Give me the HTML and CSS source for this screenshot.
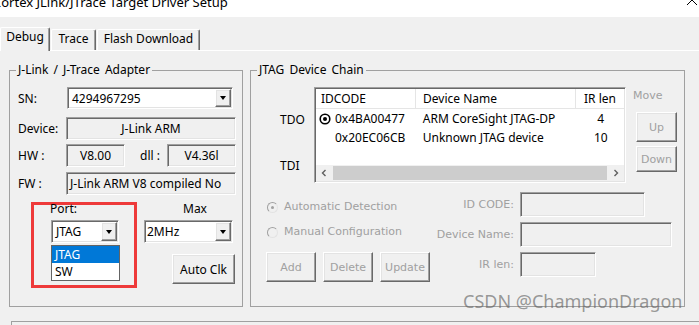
FILE: index.html
```html
<!DOCTYPE html>
<html>

<head>
    <title>Cortex JLink/JTrace Target Driver Setup</title>
    <link rel="stylesheet" href="styles.css">
</head>

<body>
    <div class="titlebar">
        <span class="title">Cortex JLink/JTrace Target Driver Setup</span>
        <svg class="close" width="12" height="12" viewBox="0 0 12 12">
            <path d="M1 1L11 11M11 1L1 11" stroke="#000" stroke-width="1" fill="none" />
        </svg>
    </div>

    <div class="tabs">
        <div class="tab active tab-debug">Debug</div>
        <div class="tab tab-trace">Trace</div>
        <div class="tab tab-flash">Flash Download</div>
    </div>

    <div class="panel">
        <fieldset class="group adapter">
            <legend>J-Link / J-Trace Adapter</legend>
            <div class="row row-sn">
                <span class="lbl">SN:</span>
                <div class="combo combo-sn">
                    <span class="combo-val">4294967295</span>
                    <span class="drop"><i class="arrow"></i></span>
                </div>
            </div>
            <div class="row row-device">
                <span class="lbl">Device:</span>
                <div class="field center w-device">J-Link ARM</div>
            </div>
            <div class="row row-hw">
                <span class="lbl">HW :</span>
                <div class="field center w-hw">V8.00</div>
                <span class="lbl-dll">dll :</span>
                <div class="field center w-dll">V4.36l</div>
            </div>
            <div class="row row-fw">
                <span class="lbl">FW :</span>
                <div class="field w-device">J-Link ARM V8 compiled No</div>
            </div>

            <div class="port-area">
                <div class="highlight-box">
                    <div class="small-lbl port-lbl">Port:</div>
                    <div class="combo combo-port">
                        <span class="combo-val">JTAG</span>
                        <span class="drop"><i class="arrow"></i></span>
                    </div>
                    <ul class="droplist">
                        <li class="sel">JTAG</li>
                        <li>SW</li>
                    </ul>
                </div>
                <div class="max-col">
                    <div class="small-lbl max-lbl">Max</div>
                    <div class="combo combo-max">
                        <span class="combo-val tight">2MHz</span>
                        <span class="drop"><i class="arrow"></i></span>
                    </div>
                    <button class="btn btn-autoclk">Auto Clk</button>
                </div>
            </div>
        </fieldset>

        <fieldset class="group chain">
            <legend>JTAG Device Chain</legend>
            <div class="chain-top">
                <div class="pins">
                    <div class="pin pin-tdo">TDO</div>
                    <div class="pin pin-tdi">TDI</div>
                </div>
                <div class="list">
                    <div class="list-head">
                        <span class="col-id">IDCODE</span>
                        <span class="col-name">Device Name</span>
                        <span class="col-ir">IR len</span>
                    </div>
                    <div class="list-row">
                        <span class="col-id">
                            <svg class="mark" width="12" height="12" viewBox="0 0 12 12">
                                <circle cx="6" cy="6" r="4.8" fill="#fff" stroke="#000" stroke-width="1.6" />
                                <circle cx="6" cy="6" r="2" fill="#000" />
                            </svg>
                            0x4BA00477
                        </span>
                        <span class="col-name">ARM CoreSight JTAG-DP</span>
                        <span class="col-ir">4</span>
                    </div>
                    <div class="list-row">
                        <span class="col-id"><i class="mark"></i>0x20EC06CB</span>
                        <span class="col-name">Unknown JTAG device</span>
                        <span class="col-ir">10</span>
                    </div>
                    <div class="list-fill"></div>
                    <div class="hscroll">
                        <span class="sb-btn">
                            <svg width="6" height="8" viewBox="0 0 6 8"><path d="M4.5 1L1.5 4L4.5 7" stroke="#606060" stroke-width="1.4" fill="none" /></svg>
                        </span>
                        <span class="sb-thumb"></span>
                        <span class="sb-btn">
                            <svg width="6" height="8" viewBox="0 0 6 8"><path d="M1.5 1L4.5 4L1.5 7" stroke="#606060" stroke-width="1.4" fill="none" /></svg>
                        </span>
                    </div>
                </div>
                <div class="move">
                    <div class="dis move-lbl">Move</div>
                    <button class="btn dis btn-up">Up</button>
                    <button class="btn dis btn-down">Down</button>
                </div>
            </div>

            <div class="detect">
                <div class="radio dis radio-auto"><span class="radio-dot on"></span>Automatic Detection</div>
                <div class="dis dlbl">ID CODE:</div>
                <div class="dfield w-id"></div>

                <div class="radio dis radio-manual"><span class="radio-dot"></span>Manual Configuration</div>
                <div class="dis dlbl">Device Name:</div>
                <div class="dfield w-name"></div>

                <div class="btns">
                    <button class="btn dis btn-edit">Add</button>
                    <button class="btn dis btn-edit">Delete</button>
                    <button class="btn dis btn-edit">Update</button>
                </div>
                <div class="dis dlbl">IR len:</div>
                <div class="dfield w-ir"></div>
            </div>
        </fieldset>
    </div>

    <div class="lower-box"></div>

    <div class="watermark">CSDN @ChampionDragon</div>
</body>

</html>
```

FILE: styles.css
```css
html {
    --face: #f0f0f0;
    --shadow: #a0a0a0;
    --dark: #696969;
    --light: #e3e3e3;
    --disabled: #a0a0a0;
    --mark: #ee3a3a;
}

body {
    margin: 0;
    width: 699px;
    height: 325px;
    overflow: hidden;
    background: var(--face);
    font-family: "Noto Sans", sans-serif;
    font-size: 12px;
    color: #000;
}

/* window title */
.titlebar {
    height: 17px;
    background: #fff;
    display: flex;
    justify-content: space-between;
    overflow: hidden;
}

.title {
    margin: -6px 0 0 -7px;
    line-height: 16px;
    font-size: 13px;
    white-space: nowrap;
}

.close {
    margin: -6px 1px 0 0;
}

/* tabs */
.tabs {
    display: flex;
    align-items: flex-end;
    height: 23px;
    margin-top: 10px;
}

.tab {
    box-sizing: border-box;
    height: 21px;
    padding-top: 1px;
    line-height: 16px;
    text-align: center;
    background: var(--face);
    border: 1px solid;
    border-bottom: 0;
    border-color: #fff var(--dark) #fff #fff;
    box-shadow: inset -1px 0 0 var(--shadow);
    border-radius: 2px 2px 0 0;
}

.tab.active {
    height: 24px;
    margin-bottom: -1px;
}

.tab-debug {
    width: 50px;
}

.tab-trace {
    width: 45px;
    margin-left: 1px;
}

.tab-flash {
    width: 103px;
    margin-left: 1px;
}

.panel {
    border-top: 1px solid #fff;
    display: flex;
    gap: 7px;
    padding: 11px 0 0 9px;
}

/* group boxes */
.group {
    margin: 0;
    padding: 0;
    min-width: 0;
    box-sizing: border-box;
    height: 245px;
    border: 1px solid var(--shadow);
}

.group legend {
    margin-left: 6px;
    padding: 0 2px;
    line-height: 16px;
    word-spacing: 2px;
}

.adapter {
    width: 234px;
}

.chain {
    width: 435px;
}

/* sunken / raised frames */
.combo,
.field,
.dfield,
.list {
    box-sizing: border-box;
    border: 1px solid;
    border-color: var(--shadow) #fff #fff var(--shadow);
    box-shadow: inset 1px 1px 0 var(--dark), inset -1px -1px 0 var(--light);
}

.btn,
.drop {
    box-sizing: border-box;
    background: var(--face);
    border: 1px solid;
    border-color: #fff var(--dark) var(--dark) #fff;
    box-shadow: inset -1px -1px 0 var(--shadow), inset 1px 1px 0 var(--light);
}

.btn {
    display: block;
    padding: 0;
    font: inherit;
    color: #000;
}

.dis {
    font-family: "DejaVu Sans", sans-serif;
    font-size: 11px;
    color: var(--disabled);
}

/* adapter rows */
.row {
    display: flex;
    align-items: center;
    margin-left: 8px;
}

.lbl {
    width: 48px;
}

.row-sn {
    margin-top: 9px;
}

.row-device {
    margin-top: 8px;
}

.row-hw {
    margin-top: 4px;
}

.row-fw {
    margin-top: 5px;
}

.combo {
    display: flex;
    height: 22px;
    background: #fff;
    padding: 1px;
}

.combo-sn {
    width: 166px;
    margin-left: 1px;
}

.combo-val {
    flex: 1;
    padding-left: 3px;
    line-height: 19px;
    white-space: nowrap;
}

.combo-val.tight {
    padding-left: 1px;
}

.drop {
    width: 16px;
    display: flex;
    align-items: center;
    justify-content: center;
}

.arrow {
    width: 0;
    height: 0;
    border-left: 3.5px solid transparent;
    border-right: 3.5px solid transparent;
    border-top: 4px solid #000;
}

.field {
    height: 23px;
    line-height: 21px;
    padding: 0 3px;
    white-space: nowrap;
    overflow: hidden;
}

.center {
    text-align: center;
}

.w-device {
    width: 170px;
}

.w-hw {
    width: 59px;
}

.w-dll {
    width: 69px;
}

.lbl-dll {
    width: 27px;
    margin-left: 15px;
}

/* port / max */
.port-area {
    display: flex;
    gap: 7px;
    margin: 7px 0 0 21px;
}

.highlight-box {
    box-sizing: border-box;
    width: 106px;
    height: 86px;
    border: 3px solid var(--mark);
    padding-left: 16px;
}

.small-lbl {
    line-height: 14px;
}

.port-lbl {
    margin-top: -3px;
}

.combo-port {
    width: 68px;
    height: 23px;
    margin: 4px 0 0 1px;
}

.droplist {
    list-style: none;
    margin: 2px 0 0 1px;
    padding: 0;
    width: 69px;
    box-sizing: border-box;
    border: 1px solid #646464;
    background: #fff;
}

.droplist li {
    height: 17px;
    line-height: 17px;
    padding-left: 3px;
}

.droplist li.sel {
    background: #0078d7;
    color: #fff;
}

.max-col {
    width: 92px;
}

.max-lbl {
    padding-left: 39px;
}

.combo-max {
    width: 89px;
    height: 23px;
    margin-top: 4px;
}

.btn-autoclk {
    width: 63px;
    height: 30px;
    margin: 11px 0 0 28px;
}

/* device chain */
.chain-top {
    display: flex;
    align-items: flex-start;
    margin-top: 9px;
}

.pins {
    width: 34px;
    margin-left: 29px;
}

.pin {
    line-height: 16px;
}

.pin-tdo {
    margin-top: 25px;
}

.pin-tdi {
    margin-top: 30px;
}

.list {
    width: 312px;
    height: 96px;
    display: flex;
    flex-direction: column;
    background: #fff;
    padding: 1px;
}

.list-head {
    display: flex;
    height: 20px;
    box-sizing: border-box;
    border-bottom: 1px solid #e5e5e5;
    line-height: 19px;
}

.list-head span {
    box-sizing: border-box;
    border-right: 1px solid #e5e5e5;
}

.list-head .col-ir {
    border-right: 0;
}

.list-row {
    display: flex;
    height: 19px;
    line-height: 19px;
}

.col-id {
    width: 100px;
    padding-left: 5px;
    white-space: nowrap;
}

.list-row .col-id {
    display: flex;
    align-items: center;
    gap: 4px;
    padding-left: 3px;
}

.mark {
    width: 12px;
    height: 12px;
    flex: none;
}

.col-name {
    width: 160px;
    padding-left: 7px;
    white-space: nowrap;
}

.col-ir {
    width: 48px;
    text-align: center;
}

.list-fill {
    flex: 1;
}

.hscroll {
    display: flex;
    height: 16px;
    background: var(--face);
}

.sb-btn {
    width: 16px;
    display: flex;
    align-items: center;
    justify-content: center;
}

.sb-thumb {
    flex: 1;
    margin: 1px 1px;
    background: #cdcdcd;
}

.move {
    margin-left: 7px;
}

.move-lbl {
    line-height: 16px;
    margin-top: 1px;
}

.btn-up {
    width: 41px;
    height: 30px;
    margin: 8px 0 0 3px;
}

.btn-down {
    width: 41px;
    height: 26px;
    margin: 4px 0 0 3px;
}

.btn.dis {
    color: var(--disabled);
}

/* detection */
.detect {
    display: grid;
    grid-template-columns: 164px 90px auto;
    grid-template-rows: 25px 25px 30px;
    row-gap: 5px;
    margin: 9px 0 0 15px;
}

.radio {
    display: flex;
    align-items: center;
    gap: 6px;
    margin-left: 1px;
    line-height: 16px;
    align-self: start;
    white-space: nowrap;
}

.radio-auto {
    margin-top: 7px;
}

.radio-manual {
    margin-top: 2px;
}

.radio-dot {
    box-sizing: border-box;
    width: 11px;
    height: 11px;
    border-radius: 50%;
    border: 1px solid;
    border-color: var(--shadow) var(--light) var(--light) var(--shadow);
    display: flex;
    align-items: center;
    justify-content: center;
}

.radio-dot.on::after {
    content: "";
    width: 3px;
    height: 3px;
    border-radius: 50%;
    background: var(--disabled);
}

.dlbl {
    text-align: right;
    padding-right: 6px;
    line-height: 25px;
    white-space: nowrap;
}

.dfield {
    height: 25px;
    align-self: start;
}

.w-id {
    width: 125px;
}

.w-name {
    width: 152px;
}

.w-ir {
    width: 76px;
}

.btns {
    display: flex;
    gap: 7px;
}

.btn-edit {
    width: 56px;
    height: 30px;
}

.lower-box {
    margin: 14px 0 0 11px;
    height: 10px;
    border-top: 1px solid var(--shadow);
    border-left: 1px solid var(--shadow);
}

.watermark {
    position: absolute;
    left: 463px;
    top: 291px;
    font-size: 18px;
    line-height: 20px;
    color: rgba(100, 100, 100, 0.65);
    white-space: nowrap;
}
```
